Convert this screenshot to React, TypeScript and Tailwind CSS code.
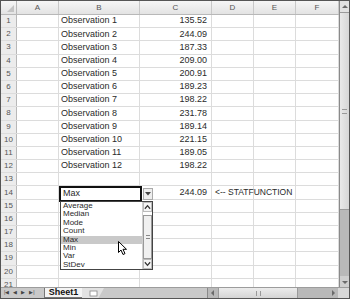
const cols = [
  { name: 'A', w: 'w-[42px]' },
  { name: 'B', w: 'w-[81px]' },
  { name: 'C', w: 'w-[72px]' },
  { name: 'D', w: 'w-[42px]' },
  { name: 'E', w: 'w-[42px]' },
  { name: 'F', w: 'w-[43px]' },
];

const values = [
  '135.52', '244.09', '187.33', '209.00', '200.91', '189.23',
  '198.22', '231.78', '189.14', '221.15', '189.05', '198.22',
];

const options = ['Average', 'Median', 'Mode', 'Count', 'Max', 'Min', 'Var', 'StDev'];

const rows = Array.from({ length: 21 }, (_, i) => {
  const n = i + 1;
  if (n <= 12) return { n, b: `Observation ${n}`, c: values[i], d: '' };
  if (n === 14) return { n, b: '', c: '244.09', d: '<-- STATFUNCTION' };
  return { n, b: '', c: '', d: '' };
});

const Arrow = ({ dir }: { dir: 'up' | 'down' | 'left' | 'right' }) => {
  const pts = {
    up: '1,5 4,2 7,5',
    down: '1,3 4,6 7,3',
    left: '5,1 2,4 5,7',
    right: '3,1 6,4 3,7',
  }[dir];
  return (
    <svg width="8" height="8" viewBox="0 0 8 8">
      <polygon points={pts} fill="#6b6b6b" />
    </svg>
  );
};

const Chevron = ({ dir }: { dir: 'up' | 'down' }) => (
  <svg width="8" height="6" viewBox="0 0 8 6">
    <polyline
      points={dir === 'up' ? '1,5 4,1.5 7,5' : '1,1 4,4.5 7,1'}
      fill="none"
      stroke="#333"
      strokeWidth="1.4"
    />
  </svg>
);

export default function App() {
  return (
    <div
      className="relative w-[350px] h-[299px] border border-[#555] bg-white overflow-hidden flex flex-col text-[#2a2a2a]"
      style={{ fontFamily: '"Liberation Sans", Arial, sans-serif' }}
    >
      <div className="flex flex-1 min-h-0">
        {/* Grid */}
        <div className="flex flex-col w-[338px] overflow-hidden">
          {/* Column headers */}
          <div className="flex h-[14px] shrink-0 bg-gradient-to-b from-[#f6f6f6] to-[#e3e3e3] border-b border-[#b8b8b8]">
            <div className="w-[16px] shrink-0 border-r border-[#b8b8b8] relative">
              <div className="absolute right-[2px] bottom-[2px] w-0 h-0 border-l-[7px] border-l-transparent border-b-[7px] border-b-[#c4c4c4]" />
            </div>
            {cols.map((c) => (
              <div
                key={c.name}
                className={`${c.w} shrink-0 border-r border-[#c8c8c8] flex items-center justify-center text-[8px] text-[#555]`}
              >
                {c.name}
              </div>
            ))}
          </div>
          {/* Rows */}
          {rows.map((r) => (
            <div key={r.n} className="flex h-[13.2px] shrink-0 border-b border-[#dcdcdc]">
              <div className="w-[16px] shrink-0 bg-[#ececec] border-r border-[#b8b8b8] flex items-center justify-center text-[8px] text-[#555]">
                {r.n}
              </div>
              <div className="w-[42px] shrink-0 border-r border-[#dcdcdc]" />
              <div className="w-[81px] shrink-0 border-r border-[#dcdcdc] flex items-center pl-[2px] text-[9px] whitespace-nowrap">
                {r.b}
              </div>
              <div className="w-[72px] shrink-0 border-r border-[#dcdcdc] flex items-center justify-end pr-[4px] text-[9px]">
                {r.c}
              </div>
              <div className="w-[42px] shrink-0 border-r border-[#dcdcdc] flex items-center pl-[3px] text-[8.5px] whitespace-nowrap">
                {r.d}
              </div>
              <div className="w-[42px] shrink-0 border-r border-[#dcdcdc]" />
              <div className="w-[43px] shrink-0 border-r border-[#dcdcdc]" />
            </div>
          ))}
        </div>
        {/* Vertical scrollbar */}
        <div className="w-[10px] shrink-0 flex flex-col bg-[#b9b9b9] border-l border-[#8a8a8a]">
          <div className="h-[11px] flex items-center justify-center bg-[#e2e2e2]">
            <Arrow dir="up" />
          </div>
          <div className="h-[198px] bg-gradient-to-r from-[#e9e9e9] to-[#d6d6d6] border-y border-[#9a9a9a] flex items-center justify-center">
            <div className="w-[5px] h-[5px] border-y border-[#999]" />
          </div>
          <div className="flex-1" />
          <div className="h-[11px] flex items-center justify-center bg-[#cfcfcf]">
            <Arrow dir="down" />
          </div>
        </div>
      </div>

      {/* Bottom tab bar */}
      <div className="h-[11px] shrink-0 flex bg-[#c9c9c9] border-t border-[#9c9c9c]">
        <div className="w-[206px] flex items-center">
          <div className="flex items-center gap-[4px] pl-[3px] text-[5px] text-[#444] w-[43px]">
            <span>|◀</span>
            <span>◀</span>
            <span>▶</span>
            <span>▶|</span>
          </div>
          <div className="h-full w-[38px] bg-[#f4f4f4] border-l border-b border-[#777] flex items-center justify-center text-[9px] font-bold text-[#111] leading-none">
            Sheet1
          </div>
          <div
            className="h-full w-[22px] bg-[#e2e2e2] flex items-center justify-center"
            style={{ clipPath: 'polygon(0 0, 100% 0, 75% 100%, 0 100%)' }}
          >
            <svg width="9" height="7" viewBox="0 0 9 7">
              <rect x="1" y="1" width="7" height="5" fill="#fff" stroke="#888" strokeWidth="0.8" />
            </svg>
          </div>
        </div>
        {/* Horizontal scrollbar */}
        <div className="flex-1 flex items-center bg-[#b9b9b9] border-l border-[#8a8a8a]">
          <div className="w-[10px] h-full flex items-center justify-center">
            <Arrow dir="left" />
          </div>
          <div className="w-[80px] h-full bg-gradient-to-b from-[#ececec] to-[#d4d4d4] border-x border-[#9a9a9a] flex items-center justify-center">
            <div className="w-[5px] h-[5px] border-x border-[#999]" />
          </div>
          <div className="flex-1" />
          <div className="w-[10px] h-full flex items-center justify-center">
            <Arrow dir="right" />
          </div>
        </div>
        <div className="w-[11px] bg-[#d8d8d8]" />
      </div>

      {/* Selected cell B14 */}
      <div className="absolute left-[58px] top-[185px] w-[83px] h-[16px] border-2 border-[#111] bg-white flex items-center pl-[2px] text-[9px]">
        Max
      </div>
      {/* Dropdown button */}
      <div className="absolute left-[142px] top-[187px] w-[10px] h-[12px] bg-[#eeeeee] border border-[#aaa] flex items-center justify-center">
        <svg width="6" height="4" viewBox="0 0 6 4">
          <polygon points="0,0 6,0 3,3.5" fill="#444" />
        </svg>
      </div>
      {/* Dropdown list */}
      <div className="absolute left-[59px] top-[200px] w-[93px] h-[69px] bg-white border border-[#444] flex">
        <div className="flex-1 flex flex-col">
          {options.map((o) => (
            <div
              key={o}
              className={`h-[8.4px] leading-[8.4px] pl-[2px] text-[8px] ${o === 'Max' ? 'bg-[#c9c9c9]' : ''}`}
            >
              {o}
            </div>
          ))}
        </div>
        <div className="w-[10px] flex flex-col border-l border-[#cfcfcf]">
          <div className="h-[10px] flex items-center justify-center border border-[#bbb] bg-[#f5f5f5]">
            <Chevron dir="up" />
          </div>
          <div className="h-[45px] mt-[3px] border border-[#999] bg-[#f0f0f0] flex items-center justify-center">
            <div className="w-[4px] h-[4px] border-y border-[#888]" />
          </div>
          <div className="flex-1" />
          <div className="h-[10px] flex items-center justify-center border border-[#bbb] bg-[#f5f5f5]">
            <Chevron dir="down" />
          </div>
        </div>
      </div>
      {/* Mouse cursor */}
      <svg className="absolute left-[117px] top-[240px]" width="11" height="15" viewBox="0 0 11 15">
        <path d="M0.5 0.5 L0.5 11.5 L3 9 L5 13.5 L7 12.6 L5 8.3 L8.5 8.3 Z" fill="#fff" stroke="#000" strokeWidth="1" />
      </svg>
    </div>
  );
}
